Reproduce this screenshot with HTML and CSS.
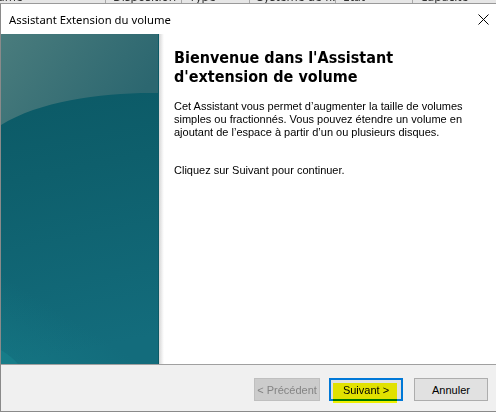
FILE: index.html
```html
<!DOCTYPE html>
<html lang="fr">

<head>
    <meta charset="UTF-8">
    <title>Assistant Extension du volume</title>
    <link rel="stylesheet" href="styles.css">
</head>

<body>
    <!-- en-tête de la liste de la fenêtre derrière, presque cachée -->
    <div class="behind">
        <div class="col c1"><span class="lbl shift">Volume</span></div>
        <div class="col c2"><span class="lbl">Disposition</span></div>
        <div class="col c3"><span class="lbl">Type</span></div>
        <div class="col c4"><span class="lbl">Système de fi...</span></div>
        <div class="col c5"><span class="lbl">État</span></div>
        <div class="col c6"><span class="lbl">Capacité</span></div>
    </div>

    <div class="dialog">
        <div class="titlebar">
            <span class="title">Assistant Extension du volume</span>
            <svg class="close" width="11" height="11" viewBox="0 0 11 11">
                <path d="M0.5 0.5 L10.5 10.5 M10.5 0.5 L0.5 10.5" stroke="#000" stroke-width="1" fill="none" />
            </svg>
        </div>

        <div class="main">
            <div class="banner">
                <svg width="158" height="330" viewBox="0 0 158 330">
                    <defs>
                        <linearGradient id="base" x1="0" y1="0" x2="0.1" y2="1">
                            <stop offset="0" stop-color="#0a5662" />
                            <stop offset="0.45" stop-color="#0e5f6c" />
                            <stop offset="1" stop-color="#136c7c" />
                        </linearGradient>
                        <linearGradient id="top" x1="0" y1="0" x2="1" y2="0.4">
                            <stop offset="0" stop-color="#4a7c7d" />
                            <stop offset="1" stop-color="#2c6770" />
                        </linearGradient>
                        <linearGradient id="glow" x1="0" y1="1" x2="1" y2="0">
                            <stop offset="0" stop-color="#17808a" stop-opacity="0.4" />
                            <stop offset="0.45" stop-color="#17808a" stop-opacity="0" />
                        </linearGradient>
                    </defs>
                    <rect width="158" height="330" fill="url(#base)" />
                    <rect y="230" width="158" height="100" fill="url(#glow)" />
                    <path d="M0 0 H158 V59 C 105 58, 40 66, 0 91 Z" fill="url(#top)" />
                    <path d="M0 316 C 7 320, 13 325, 17 330 H0 Z" fill="#1a8590" opacity="0.5" />
                    <rect x="157" width="1" height="330" fill="#0c5a66" />
                </svg>
            </div>
            <div class="shadow"></div>
            <div class="content">
                <h1>Bienvenue dans l'Assistant d'extension de volume</h1>
                <p>Cet Assistant vous permet d’augmenter la taille de volumes simples ou fractionnés. Vous pouvez étendre un volume en ajoutant de l’espace à partir d’un ou plusieurs disques.</p>
                <p class="next">Cliquez sur Suivant pour continuer.</p>
            </div>
        </div>

        <div class="footer">
            <button class="btn prev" disabled>&lt; Précédent</button>
            <button class="btn focus">Suivant &gt;<span class="marker"></span></button>
            <button class="btn cancel">Annuler</button>
        </div>
    </div>
</body>

</html>
```

FILE: styles.css
```css
* {
    margin: 0;
    padding: 0;
    box-sizing: border-box;
}

body {
    width: 496px;
    height: 412px;
    overflow: hidden;
    background: #f0f0f0;
    font-family: "Liberation Sans", Arial, sans-serif;
    color: #000;
}

.behind {
    height: 4px;
    display: flex;
    background: #e6e6e6;
    border-bottom: 1px solid #9a9a9a;
    overflow: hidden;
}

.behind .col {
    height: 3px;
    overflow: hidden;
    border-right: 1px solid #a8a8a8;
    padding-left: 7px;
    white-space: nowrap;
}

/* seul le bas des lettres dépasse */
.behind .lbl {
    display: block;
    margin-top: -9px;
    font-family: "Noto Sans", sans-serif;
    font-size: 12px;
    line-height: 12px;
    color: #333;
}

.behind .c1 { width: 106px; padding-left: 0; }
.behind .c2 { width: 76px; }
.behind .c3 { width: 68px; }
.behind .c4 { width: 86px; }
.behind .c5 { width: 77px; }
.behind .c6 { flex: 1; border-right: none; }

.behind .shift {
    margin-left: -20px;
}

.dialog {
    height: 408px;
    display: flex;
    flex-direction: column;
    border-left: 1px solid #8a8a8a;
    border-bottom: 1px solid #8a8a8a;
    background: #fff;
}

.titlebar {
    height: 30px;
    display: flex;
    align-items: center;
    justify-content: space-between;
    padding: 0 7px 0 8px;
    background: #fff;
}

.title {
    font-family: "Noto Sans", "Segoe UI", sans-serif;
    font-size: 11.3px;
    margin-top: 1px;
}

.close {
    display: block;
}

.main {
    height: 330px;
    display: flex;
}

.banner {
    width: 158px;
    height: 330px;
}

.banner svg {
    display: block;
}

.shadow {
    width: 5px;
    background: linear-gradient(to right, #d6d6d6, #f4f4f4 70%, #fff);
}

.content {
    flex: 1;
    padding: 14px 10px 0 10px;
}

.content h1 {
    font-family: "DejaVu Sans Condensed", "DejaVu Sans", sans-serif;
    font-stretch: condensed;
    font-weight: bold;
    font-size: 16px;
    line-height: 19px;
    margin-bottom: 14px;
}

.content p {
    font-size: 11px;
    line-height: 13px;
}

.content p.next {
    margin-top: 25px;
}

.footer {
    height: 47px;
    display: flex;
    justify-content: flex-end;
    align-items: flex-start;
    padding: 13px 8px 0 0;
    background: #f0f0f0;
    border-top: 1px solid #a0a0a0;
}

.btn {
    height: 23px;
    width: 74px;
    font-family: "Liberation Sans", Arial, sans-serif;
    font-size: 11px;
    color: #000;
    background: #e1e1e1;
    border: 1px solid #adadad;
    overflow: visible;
    position: relative;
}

.btn.prev {
    width: 66px;
    color: #838383;
    background: #cccccc;
    border-color: #bfbfbf;
}

.btn.focus {
    margin-left: 9px;
    border: 2px solid #0078d7;
}

.btn.cancel {
    margin-left: 11px;
}

/* surlignage jaune du tutoriel */
.marker {
    position: absolute;
    left: 2px;
    top: 3px;
    width: 64px;
    height: 20px;
    background: #ffff00;
    mix-blend-mode: multiply;
}
```
